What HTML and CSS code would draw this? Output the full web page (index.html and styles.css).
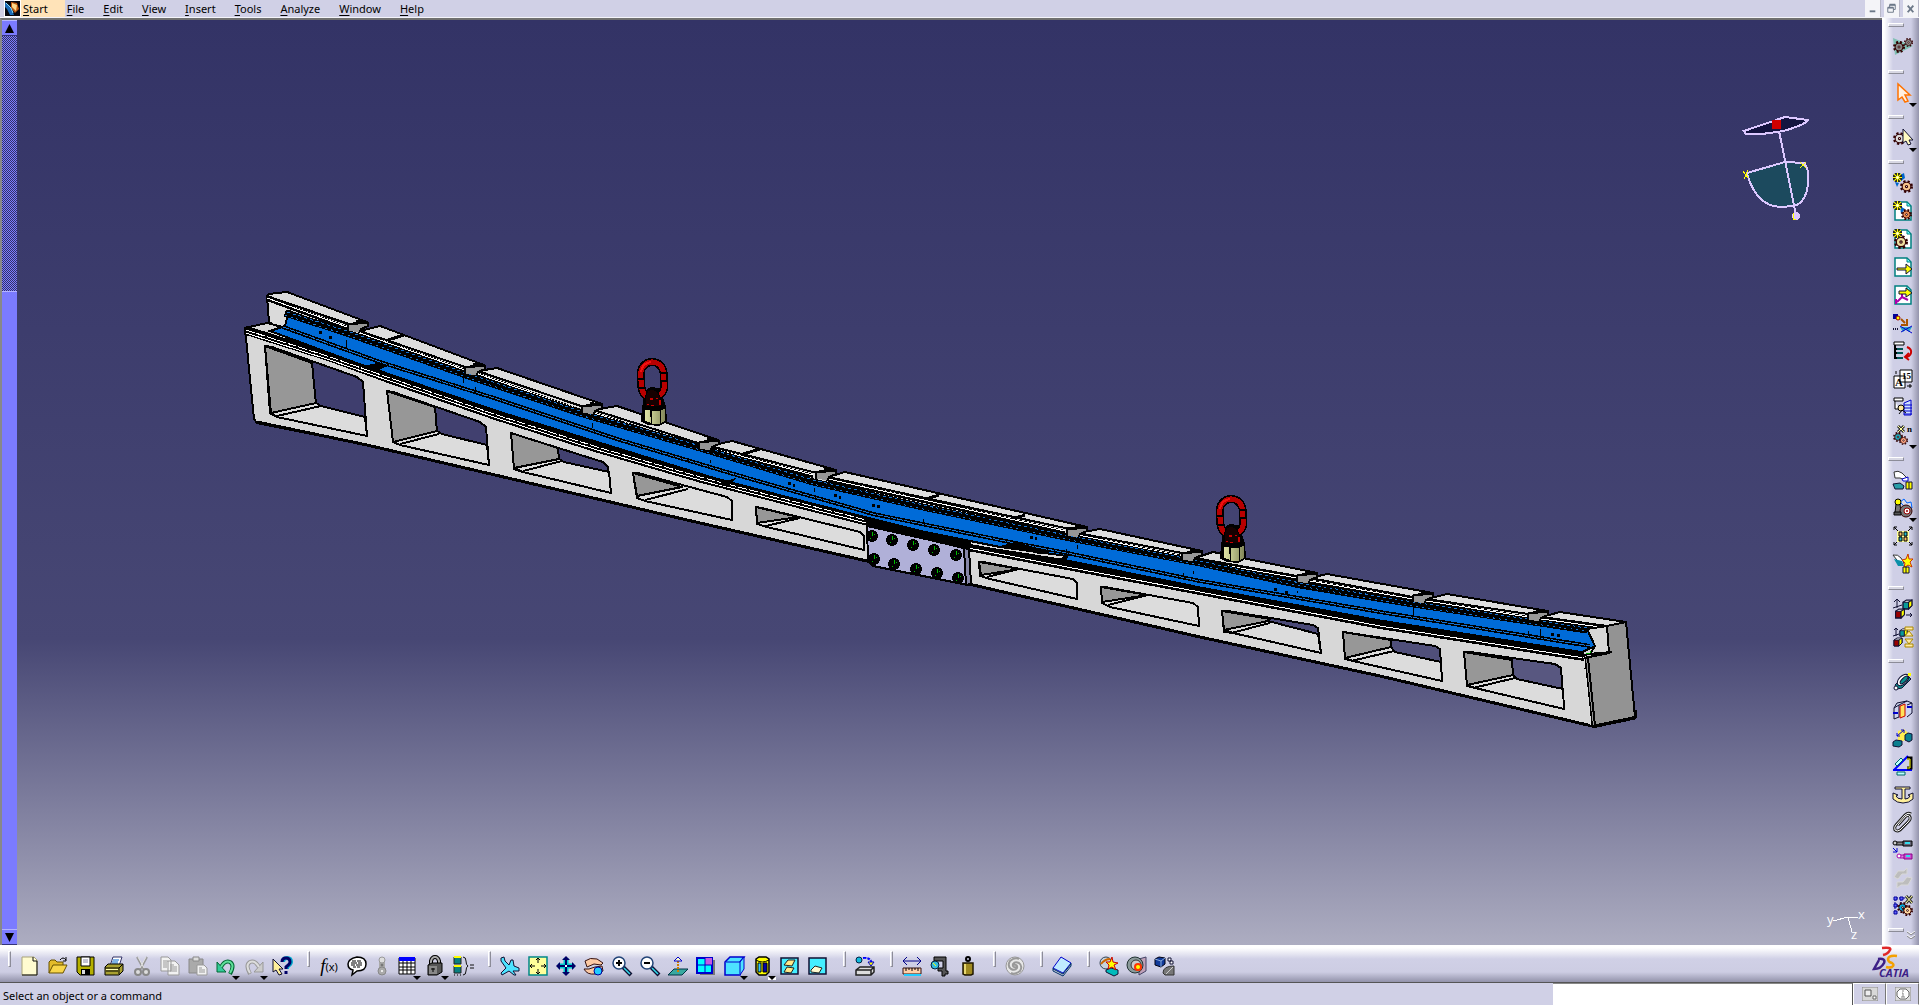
FILE: index.html
```html
<!DOCTYPE html>
<html lang="en">
<head>
	<meta charset="utf-8">
	<title>CATIA</title>
	<link rel="stylesheet" href="styles.css">
</head>
<body>

<!-- shared icon parts -->
<svg class="defs" aria-hidden="true">
	<defs>
		<symbol id="gear" viewBox="0 0 12 12"><circle cx="6" cy="6" r="5" fill="none" stroke="#300" stroke-width="2" stroke-dasharray="2 2"/><circle cx="6" cy="6" r="4" stroke="#300"/><circle cx="6" cy="6" r="1" fill="#fff" stroke="#300"/></symbol>
		<symbol id="spark" viewBox="0 0 8 8"><path d="M4 0v8M0 4h8M1 1l6 6M7 1L1 7" stroke="#222" stroke-width="3"/><path d="M4 0v8M0 4h8M1 1l6 6M7 1L1 7" stroke="#ff0"/><path d="M3 3h2v2H3z" fill="#fff"/></symbol>
		<symbol id="page" viewBox="0 0 20 20"><path d="M2 1h12l4 4v14H2z" fill="#fff" stroke="#008080" stroke-width="1.5"/><path d="M14 1v4h4z" fill="#6ff" stroke="#008080"/></symbol>
		<symbol id="cube" viewBox="0 0 10 10"><path d="M1 3l3-2h5v5L6 9H1z" fill="#fff" stroke="#113"/><path d="M1 3h5v6H1z" fill="currentColor" stroke="#113"/><path d="M6 3l3-2v5L6 9z" fill="#ff0" stroke="#113"/></symbol>
	</defs>
</svg>

<header class="menubar">
	<svg class="app-logo" viewBox="0 0 15 15"><path d="M0 0h15v15H0z" fill="#080810"/><path d="M6 1l6 1 2 6-4 4-4-5z" fill="#c05a10"/><path d="M7 2l5 2-1 6-4-4z" fill="#ffd98a"/><path d="M0 1l5 4 4 9-4 0-3-6-2-2z" fill="#1c6cb8"/><path d="M1 2l5 5 2 5" stroke="#8fe0ff" fill="none"/></svg>
	<nav class="menus">
		<button class="menu menu-start"><u>S</u>tart</button>
		<button class="menu"><u>F</u>ile</button>
		<button class="menu"><u>E</u>dit</button>
		<button class="menu"><u>V</u>iew</button>
		<button class="menu"><u>I</u>nsert</button>
		<button class="menu"><u>T</u>ools</button>
		<button class="menu"><u>A</u>nalyze</button>
		<button class="menu"><u>W</u>indow</button>
		<button class="menu"><u>H</u>elp</button>
	</nav>
	<div class="win-buttons">
		<button aria-label="Minimize"><svg viewBox="0 0 16 16"><path d="M5 11h6" stroke="#6c7888" stroke-width="2"/></svg></button>
		<button aria-label="Restore"><svg viewBox="0 0 16 16"><path d="M6 7V4h6v5h-2M4 7h6v5H4z" fill="none" stroke="#6c7888"/><path d="M4 7h6M6 4h6" stroke="#6c7888" stroke-width="2"/></svg></button>
		<button aria-label="Close"><svg viewBox="0 0 16 16"><path d="M5 5l6 7M11 5l-6 7" stroke="#6c7888" stroke-width="2"/></svg></button>
	</div>
</header>

<main class="work">
	<div class="scroll">
		<button class="scroll-btn" aria-label="Scroll up"><svg viewBox="0 0 15 15"><path d="M7.500 3L12 12H3z"/></svg></button>
		<div class="scroll-track"></div>
		<div class="scroll-thumb"></div>
		<button class="scroll-btn" aria-label="Scroll down"><svg viewBox="0 0 15 15"><path d="M7.500 12L12 3H3z"/></svg></button>
	</div>

	<section class="view">
		<svg class="scene" viewBox="17 20 1865 925" shape-rendering="crispEdges">
			<defs>
				<linearGradient id="nutFill" x1="0" x2="1" y1="0" y2="0"><stop offset="0" stop-color="#dfe3a4"/><stop offset=".35" stop-color="#c4ca90"/><stop offset="1" stop-color="#84885a"/></linearGradient>
				<g id="notch" stroke="#000"><path d="M-21 2L-4 1 0 1-3 5-8 6-9 9-20 8z" fill="#979797" stroke="none"/><path d="M-20 1L0 0M-20 1v7M-12-2L0 0v3l-7 3-2 4M-16 1l8-3" fill="none" stroke-width="2"/></g>
				<g id="bolt" stroke="none"><circle r="6" fill="#000"/><path d="M0-4h1v4h-1zM2-2h1v1h-1zM-2 2h1v1h-1z" fill="#0b0"/></g>
				<g id="lift">
					<path d="M643 408l3-17 5-3 8 1 6 18 1 14-7 4-11-1-6-3z" fill="#000" stroke="#000" stroke-width="2"/>
					<path d="M645 410h5l1 13-6-2zM652 411h8v13h-8zM661 410l4-1v12l-4 2z" fill="url(#nutFill)" stroke="none"/>
					<rect x="641" y="362" width="23" height="36" rx="12" fill="none" stroke="#000" stroke-width="8" transform="rotate(-3 652 380)"/>
					<rect x="641" y="362" width="23" height="36" rx="12" fill="none" stroke="#b80000" stroke-width="5" transform="rotate(-3 652 380)"/>
					<path d="M641 372q1-9 10-10" fill="none" stroke="#f01010" stroke-width="2"/>
					<path d="M638 379h6M638 388h6M661 373h6M661 381h6M652 394v8" stroke="#000" stroke-width="2"/>
					<path d="M645 406q0-12 3-15 4-3 8 0 5 4 6 15z" fill="#160000" stroke="#000"/>
					<path d="M650 398h3v2h-3zM659 400h2v5h-2zM647 404h2v1h-2zM651 405h3v1h-3zM656 398h2v1h-2z" fill="#c00" stroke="none"/>
				</g>
			</defs>

			<!-- rear rail, body first then the top blocks -->
			<g stroke="#000" stroke-width="2" stroke-linejoin="round">
				<path d="M267 296L347 324 465 367 581 406 698 443 813 472 923 498 1065 528 1182 553 1297 576 1413 597 1528 614 1607 626 1609 653 1584 658 1380 634 1180 598 970 552 730 488 497 422 330 360 269 322z" fill="#dadada"/>
				<path d="M287 292L367 322 349 324 267 296 269 294z" fill="#dcdcdc"/>
				<path d="M380 326L484 365 465 367 360 331z" fill="#dcdcdc"/>
				<path d="M497 368L602 404 581 406 478 371z" fill="#dcdcdc"/>
				<path d="M617 406L718 440 698 443 594 410z" fill="#dcdcdc"/>
				<path d="M732 441L836 470 813 472 710 446z" fill="#dcdcdc"/>
				<path d="M845 472L1087 527 1065 528 828 477z" fill="#dcdcdc"/>
				<path d="M1100 529L1202 551 1182 553 1078 533z" fill="#dcdcdc"/>
				<path d="M1213 552L1317 573 1297 576 1195 558z" fill="#dcdcdc"/>
				<path d="M1327 574L1433 593 1413 597 1310 578z" fill="#dcdcdc"/>
				<path d="M1447 594L1548 611 1528 614 1427 599z" fill="#dcdcdc"/>
				<path d="M1560 612L1626 622 1607 626 1542 617z" fill="#dcdcdc"/>
				<path d="M404 335l-16 5M760 449l-17 5M939 495l-16 5M1025 515l-16 5" stroke-width="3"/>
			</g>
			<g fill="none" stroke="#000">
				<path d="M267 299L347 328M360 334L465 371M478 375L581 411M594 414L698 447M710 449L813 476M828 480L1065 532M1078 536L1182 557M1195 561L1297 579M1310 582L1413 600M1427 602L1528 618M1542 620L1607 629" stroke-width="4"/>
				<path d="M267 298L347 327M360 333L465 370M478 374L581 410M594 413L698 446M710 448L813 475M828 479L1065 531M1078 535L1182 556M1195 560L1297 578M1310 581L1413 599M1427 601L1528 617M1542 619L1607 628" stroke="#fff"/>
			</g>

			<!-- front beam -->
			<path d="M245 328L267 323 290 329 390 372 497 412 597 443 727 480 870 520 970 545 1067 562 1200 590 1380 624 1584 655 1592 726 1380 676 1200 637 973 585 867 561 700 523 367 445 257 423 254 419z" fill="#d7d7d7" stroke="#000" stroke-width="2" stroke-linejoin="round"/>
			<path d="M257 422L367 445 700 523 867 561 973 585 1200 637 1380 676 1592 726" fill="none" stroke="#000" stroke-width="3"/>

			<!-- blue curved profile -->
			<path d="M289 311L347 332 463 372 583 412 697 446 813 481 923 505 1065 534 1200 561 1300 582 1413 602 1527 619 1587 628 1595 646 1580 653 1380 621 1200 589 1058 561 1067 556 1000 547 870 521 727 482 620 449 497 411 380 371 367 367 270 331 285 326z" fill="#006bd8" stroke="#000" stroke-width="2"/>
			<g fill="none" stroke="#000">
				<path d="M285 313L347 333 463 374 583 414 697 447 813 482 923 507 1065 537 1200 563 1300 585 1413 604 1527 621 1587 630" stroke-width="7"/>
				<path d="M287 312L347 331 463 372 583 412 697 445 813 480 923 505 1065 535 1200 561 1300 583 1413 602 1527 619 1587 628" stroke="#1673d2" stroke-dasharray="3 3"/>
				<path d="M285 315L347 335 463 376 583 416 697 449 813 484 923 509 1065 539 1200 565 1300 586 1413 606 1527 623 1587 631" stroke="#1673d2" stroke-dasharray="2 4"/>
				<path d="M283 327L380 362 497 399 620 440 730 473 873 514 1010 542 1067 553 1200 581 1380 612 1590 646" stroke-width="4"/>
				<path d="M283 327L380 362 497 399 620 440 730 473 873 514 1010 542 1067 553 1200 581 1380 612 1590 646" stroke="#1673d2" stroke-dasharray="6 1"/>
				<path d="M245 330L330 357 390 379 497 416 597 448 700 478 800 504 870 522 970 547" stroke-width="9"/>
				<path d="M246 330L330 357 390 378 497 415 597 447 700 477 800 503 866 520" stroke="#fff" stroke-dasharray="9 2"/>
				<path d="M246 333L330 360 390 381 497 418 597 450 700 480 800 506 866 523" stroke="#fff"/>
				<path d="M868 523L970 548 1067 563 1200 590 1380 623 1584 655" stroke-width="7"/>
				<path d="M968 549L1067 568 1200 593 1380 627 1584 659" stroke-width="4"/>
				<path d="M968 548L1067 567 1200 592 1380 626 1584 658" stroke="#fff"/>
			</g>
			<path d="M362 366l16-3 10 3-14 6zM716 484l20-6-8 9zM1000 546l16-4 36 10-12 2zM1046 561l22-4-8 8z"/>
			<g>
				<use href="#notch" x="368" y="323"/><use href="#notch" x="485" y="366"/><use href="#notch" x="602" y="405"/><use href="#notch" x="719" y="441"/>
				<use href="#notch" x="836" y="471"/><use href="#notch" x="1087" y="528"/><use href="#notch" x="1202" y="552"/><use href="#notch" x="1317" y="574"/>
				<use href="#notch" x="1433" y="594"/><use href="#notch" x="1548" y="612"/>
			</g>
			<path d="M319 331h3v3h-3zM329 336h3v3h-3zM788 482h3v3h-3zM793 484h2v3h-2zM834 494h3v3h-3zM839 496h2v3h-2zM872 504h3v3h-3zM877 505h3v3h-3zM1030 536h3v3h-3zM1035 537h2v3h-2zM1274 588h3v3h-3zM1285 591h3v3h-3zM1551 633h3v3h-3zM1557 634h3v3h-3z"/>
			<path d="M346 340v9M463 377v6M475 387v6M592 423v5M710 460v3M814 488v4M923 519v3M1066 549v5M1077 545v4M1183 573v4M1193 571v3M1297 591v2M1309 597v2M1413 607v10M1528 631v3M1540 629v10" stroke="#000"/>

			<!-- openings: sky, side wall, floor, outline -->
			<g stroke="#000" stroke-width="2" stroke-linejoin="round">
				<path d="M265 346L272 347 357 377 363 382 367 436 277 417 270 413z" fill="#3f3e6e"/>
				<path d="M265 346L312 363 316 404 271 414z" fill="#979797"/><path d="M316 403L321 406 365 417 367 436 277 417 271 413z" fill="#dcdcdc"/><path d="M277 416L321 406"/>
				<path d="M387 391L393 392 480 422 486 427 489 465 400 445 393 442z" fill="#41406f"/>
				<path d="M387 391L435 407 437 432 393 442z" fill="#979797"/><path d="M437 431L442 434 487 445 489 465 400 445 393 442z" fill="#dcdcdc"/><path d="M400 444L439 434"/>
				<path d="M511 433L517 435 603 462 608 467 611 493 523 472 514 469z" fill="#424170"/>
				<path d="M511 433L558 448 559 460 514 469z" fill="#979797"/><path d="M559 459L564 462 609 472 611 493 523 472 514 468z" fill="#dcdcdc"/><path d="M523 471L562 461"/>
				<path d="M633 473L638 473 727 497 732 501 732 520 645 501 637 498z" fill="#dcdcdc"/><path d="M633 473L682 487 637 496z" fill="#979797"/><path d="M645 500L688 489"/>
				<path d="M756 507L762 508 860 532 864 536 864 550 767 527 757 524z" fill="#dcdcdc"/><path d="M756 507L798 517 757 523z" fill="#979797"/><path d="M766 526L800 518"/>
				<path d="M979 562L983 562 1073 579 1077 583 1077 599 990 579 980 576z" fill="#dcdcdc"/><path d="M979 562L1020 569 981 575z" fill="#979797"/><path d="M987 577L1019 569"/>
				<path d="M1101 587L1105 587 1193 603 1198 607 1199 626 1110 607 1102 603z" fill="#dcdcdc"/><path d="M1101 587L1148 595 1102 602z" fill="#979797"/><path d="M1108 605L1148 595"/>
				<path d="M1222 611L1228 611 1313 625 1318 628 1321 653 1233 633 1224 632z" fill="#4a4976"/>
				<path d="M1222 611L1270 619 1268 622 1224 630z" fill="#979797"/><path d="M1268 621L1318 634 1321 653 1233 633 1224 630z" fill="#dcdcdc"/><path d="M1231 633L1270 623"/>
				<path d="M1343 632L1350 633 1435 646 1440 649 1442 681 1353 661 1345 659z" fill="#504f7a"/>
				<path d="M1343 632L1391 640 1391 648 1345 658z" fill="#979797"/><path d="M1391 647L1395 652 1441 662 1442 681 1353 661 1345 658z" fill="#dcdcdc"/><path d="M1351 661L1394 651"/>
				<path d="M1464 652L1470 652 1555 664 1561 668 1564 709 1475 688 1467 686z" fill="#585780"/>
				<path d="M1464 652L1512 660 1513 676 1467 685z" fill="#979797"/><path d="M1513 675L1517 679 1563 689 1564 709 1475 688 1467 685z" fill="#dcdcdc"/><path d="M1473 688L1515 678"/>
			</g>

			<!-- right end -->
			<g stroke="#000" stroke-width="2" stroke-linejoin="round">
				<path d="M1587 629L1607 626 1609 653 1590 654 1595 646z" fill="#d7d7d7"/>
				<path d="M1607 626L1626 622 1635 717 1592 726 1585 658 1609 653z" fill="#939393"/>
				<path d="M1582 657L1588 654 1612 652M1588 658L1595 726" fill="none"/>
				<path d="M1592 727L1635 718V710" fill="none" stroke-width="3"/>
				<path d="M1584 659l7 66" stroke="#ddd" stroke-width="1"/>
				<path d="M1586 653h4v-2" fill="none" stroke="#0a0" stroke-width="1"/>
			</g>

			<!-- splice plate -->
			<g stroke="#000" stroke-width="2">
				<path d="M867 526L966 548 968 585 873 566 868 561z" fill="#b0b0d8"/>
				<path d="M964 548l5 1 2 35-5 1z" fill="#8686a8"/>
				<path d="M867 524L968 548" stroke-width="4" stroke-dasharray="14 3"/>
			</g>
			<use href="#bolt" x="872" y="536"/><use href="#bolt" x="892" y="540"/><use href="#bolt" x="913" y="545"/><use href="#bolt" x="934" y="550"/><use href="#bolt" x="956" y="555"/>
			<use href="#bolt" x="874" y="559"/><use href="#bolt" x="894" y="564"/><use href="#bolt" x="916" y="569"/><use href="#bolt" x="937" y="573"/><use href="#bolt" x="958" y="578"/>

			<use href="#lift"/>
			<use href="#lift" x="579" y="137"/>

			<!-- compass -->
			<g stroke="#dcc8ff" stroke-width="2" fill="none">
				<path d="M1744 131L1785 117 1808 120Q1806 124 1787 130 1765 135 1746 134z" fill="#141440"/>
				<path d="M1747 173L1785 162 1804 163Q1810 170 1808 185 1806 200 1797 205 1785 208 1773 206 1754 200 1747 173z" fill="#1c4a5e"/>
				<path d="M1779 131L1796 215"/>
				<circle cx="1796" cy="216" r="3" fill="#dcc8ff"/>
				<path d="M1743 171l5 7M1748 170l-4 9M1800 162l6 6M1806 162l-6 6M1793 213v6h3" stroke="#ff0" stroke-width="1"/>
			</g>
			<path d="M1772 120h9v9h-9z" fill="#d00000"/>

			<!-- axis system -->
			<path d="M1833 921L1848 917 1858 918M1848 917L1852 932" stroke="#fff" fill="none"/>
			<g class="axis-text"><text x="1827" y="924">y</text><text x="1858" y="919">x</text><text x="1851" y="939">z</text></g>
		</svg>
	</section>

	<aside class="side-tools">
		<div class="grip-h"></div>
		<button class="tool tool-wb" aria-label="Assembly Design"><svg viewBox="0 0 20 20"><path d="M0 1l20 8-18 9z" fill="#7fc0b4"/><g fill="#888"><use href="#gear" x="0" y="4" width="12" height="12"/><use href="#gear" x="11" y="1" width="9" height="9"/></g></svg></button>
		<div class="grip-h"></div>
		<button class="tool more" aria-label="Select"><svg viewBox="0 0 20 20"><path d="M5 1v16l4-3 3 5 3-1-3-6h5z" fill="#fff0e0" stroke="#ff7300" stroke-width="1.500"/></svg></button>
		<div class="grip-h"></div>
		<button class="tool more" aria-label="Component selection"><svg viewBox="0 0 20 20"><g fill="#ddd"><use href="#gear" x="0" y="4" width="13" height="13"/></g><path d="M10 1v14l3-2 2 4 3-1-2-4h4z" fill="#fffbc0" stroke="#113"/></svg></button>
		<div class="grip-h"></div>
		<button class="tool" aria-label="Component"><svg viewBox="0 0 20 20"><path d="M7 2l4-2 1 5-4 3zM2 9l4 1-2 4z" fill="#06c"/><g fill="#f6c48c"><use href="#gear" x="7" y="7" width="13" height="13"/></g><use href="#spark" width="9" height="9"/></svg></button>
		<button class="tool" aria-label="Product"><svg viewBox="0 0 20 20"><use href="#page"/><path d="M7 5l5 3-4 5z" fill="#06c"/><g fill="#e88a50"><use href="#gear" x="8" y="8" width="11" height="11"/></g><use href="#spark" width="9" height="9"/></svg></button>
		<button class="tool" aria-label="Part"><svg viewBox="0 0 20 20"><use href="#page"/><g fill="#efe0a0"><use href="#gear" x="1" y="6" width="14" height="14"/></g><use href="#spark" width="9" height="9"/></svg></button>
		<button class="tool" aria-label="Existing component"><svg viewBox="0 0 20 20"><use href="#page"/><path d="M4 11h9V7l6 5-6 5v-4H4z" fill="#ff0" stroke="#113"/></svg></button>
		<button class="tool" aria-label="Existing component with positioning"><svg viewBox="0 0 20 20"><use href="#page"/><path d="M4 17l5-5V8m0 4l6 3M3 14v5" stroke="#a0a" stroke-width="2" fill="none"/><path d="M6 6h7V3l6 5-6 4V9H6z" fill="#ff0" stroke="#113"/></svg></button>
		<button class="tool" aria-label="Replace component"><svg viewBox="0 0 20 20"><path d="M0 1h5v5H0z" fill="#009"/><circle cx="5" cy="5" r="2" fill="#ff0" stroke="#900"/><path d="M8 6l4 4M14 6v6H8" stroke="#a50" stroke-width="2" fill="none"/><path d="M7 14h12l-3 5-3-3-3 3z" fill="#29a8c8"/><path d="M7 13l12 7M19 13L8 19" stroke="#00c"/><path d="M0 16h1m1 0h1m1 0h1" stroke="#113" stroke-width="2"/></svg></button>
		<button class="tool" aria-label="Graph tree reordering"><svg viewBox="0 0 20 20"><path d="M1 1h10v3H1z" fill="#fff" stroke="#000"/><path d="M2 4v14M2 8h8M2 12h8M2 17h8" stroke="#000" stroke-width="2"/><path d="M4 8h6M4 12h6M4 17h6" stroke="#0aa"/><path d="M14 6q5 2 4 6t-6 4M16 12l-4 4 4 3" stroke="#c00" stroke-width="2" fill="none"/></svg></button>
		<button class="tool" aria-label="Generate numbering"><svg viewBox="0 0 20 20"><path d="M7 1h12v12H7zM1 7h11v12H1z" fill="#fff" stroke="#000"/><text x="2" y="17" class="glyph">A</text><text x="9" y="10" class="glyph glyph-s">15</text><path d="M14 17h5m-2-2v4M3 2v3" stroke="#000"/></svg></button>
		<button class="tool" aria-label="Selective load"><svg viewBox="0 0 20 20"><path d="M1 1h9v3H1zM2 4v8h4" fill="#fff" stroke="#000"/><path d="M11 6l7-3v15l-7 0z" fill="#cfe0ff" stroke="#00c"/><path d="M11 8h8m-8 3h8m-8 3h8m-8 3h8" stroke="#00c"/><circle cx="8" cy="11" r="3" fill="#ffe9a0" stroke="#000"/><path d="M6 17l3-4 4 3" stroke="#000" fill="none"/></svg></button>
		<button class="tool more" aria-label="Manage representations"><svg viewBox="0 0 20 20"><path d="M5 1l6 6M11 1L5 7" stroke="#333" stroke-width="3"/><path d="M5 1l6 6M11 1L5 7" stroke="#ff9"/><g fill="#2ab"><use href="#gear" x="0" y="7" width="10" height="10"/></g><g fill="#fa8"><use href="#gear" x="6" y="11" width="9" height="9"/></g><text x="14" y="7" class="glyph glyph-s">n</text></svg></button>
		<div class="grip-h"></div>
		<button class="tool" aria-label="Manipulation"><svg viewBox="0 0 20 20"><path d="M1 2q4-2 8 1l5 5-2 2-5-2-5 0z" fill="#fff" stroke="#333"/><path d="M9 9l6-2v4l-5 0z" fill="#fff" stroke="#00c"/><path d="M0 14l7-1 4 3-1 3H2z" fill="#2a9da8" stroke="#113"/><path d="M13 12h6v7h-6z" fill="#ff0" stroke="#113"/><path d="M16 12v7" stroke="#113"/></svg></button>
		<button class="tool more" aria-label="Snap"><svg viewBox="0 0 20 20"><path d="M7 4l4-3 3 4 4-1 1 6-6 0z" fill="#dde" stroke="#06f"/><path d="M3 6h4l1 9H2z" fill="#777" stroke="#000"/><circle cx="5" cy="4" r="3" fill="#ff0" stroke="#000"/><circle cx="13" cy="13" r="6" fill="#777" stroke="#300"/><circle cx="14" cy="13" r="3" fill="#fff" stroke="#900"/><circle cx="14" cy="13" r="1" fill="#900"/><path d="M1 14h7v3H1z" fill="#555" stroke="#000"/></svg></button>
		<button class="tool" aria-label="Explode"><svg viewBox="0 0 20 20"><path d="M1 1l5 5M19 1l-5 5M1 19l5-5M19 19l-5-5M1 4V1h3M16 1h3v3M1 16v3h3M16 19h3v-3" stroke="#000" fill="none"/><path d="M4 5h12v11H4z" fill="#ff9"/><path d="M6 6h3v4H6zM11 11h3v4h-3z" fill="#fb6" stroke="#000"/><path d="M11 6h3v4h-3zM6 11h3v4H6z" fill="#2bc" stroke="#000"/></svg></button>
		<button class="tool" aria-label="Stop on clash"><svg viewBox="0 0 20 20"><path d="M0 1q5-1 8 3l3 5-4 1z" fill="#fff" stroke="#333"/><path d="M1 5l8 2 2 5H5z" fill="#0a8fa8"/><path d="M15 0l1 5h4l-3 3 2 5-4-2-4 3 1-5-3-3 4-1z" fill="#ff0" stroke="#c30"/><path d="M10 13h6v6h-6z" fill="#ff0" stroke="#113"/><path d="M13 13v6" stroke="#113"/></svg></button>
		<div class="grip-h"></div>
		<button class="tool" aria-label="Quick constraint"><svg viewBox="0 0 20 20"><g color="#0a9a9a"><use href="#cube" x="9" y="0" width="11" height="11"/></g><g color="#900"><use href="#cube" x="1" y="9" width="12" height="11"/></g><path d="M4 0v9M1 3l3-3 3 3M0 9l9-3M13 16h6m-2-2l2 2-2 2" stroke="#113" fill="none"/></svg></button>
		<button class="tool" aria-label="Reuse pattern"><svg viewBox="0 0 20 20"><g color="#0a9a9a"><use href="#cube" x="6" y="0" width="9" height="11"/></g><g color="#900"><use href="#cube" x="0" y="10" width="10" height="10"/></g><path d="M3 1v8M1 3l2-2 2 2M0 9l6-2" stroke="#113" fill="none"/><path d="M12 0h8v3h-8zM12 17h8v3h-8zM16 4l4 5h-8zM12 12h8l-4 5z" fill="#ffe9a0" stroke="#a80"/></svg></button>
		<div class="grip-h"></div>
		<button class="tool" aria-label="Coincidence"><svg viewBox="0 0 20 20"><path d="M2 13L13 2l5 5-9 9-5 1z" fill="#0a8f8f" stroke="#113"/><ellipse cx="10" cy="8" rx="7" ry="4" transform="rotate(-45 10 8)" fill="#fff" stroke="#113"/><ellipse cx="11" cy="8" rx="5" ry="2" transform="rotate(-45 11 8)" fill="#0a8f8f" stroke="#113"/><path d="M15 1h3v3h-3z" fill="#ff0"/><circle cx="3" cy="16" r="2" fill="#fff" stroke="#113"/></svg></button>
		<button class="tool" aria-label="Contact"><svg viewBox="0 0 20 20"><path d="M1 8l5-3v12l-5 2zM1 8l3-5 10-2 5 2v10l-5 4M14 5l5-2M6 5l8-4" fill="#cfd4ee" stroke="#113"/><path d="M7 6l5-2v12l-5 2z" fill="#ffe35a" stroke="#c00"/><path d="M0 13h5M14 7h5" stroke="#00c" stroke-width="2"/></svg></button>
		<button class="tool" aria-label="Offset"><svg viewBox="0 0 20 20"><path d="M5 3l6-2 4 4-4 8-6-1z" fill="#ffef50"/><path d="M4 8l7-6M4 5v3h3M8 2h3v3" stroke="#00c" fill="none"/><path d="M12 7l3-2 4 1v6l-3 2-4-2zM0 14l3-2 6 1v4l-3 2-6-1z" fill="#0a7f8f" stroke="#113"/></svg></button>
		<button class="tool" aria-label="Angle"><svg viewBox="0 0 20 20"><path d="M0 14h19M1 14L15 0" stroke="#00f" stroke-width="2"/><path d="M2 8l6-6 2 2-6 6zM4 16h8v3H4z" fill="#bff" stroke="#066"/><path d="M14 2h4v10h-4" fill="none" stroke="#000" stroke-width="3"/><path d="M14 3h3v9h-3" fill="none" stroke="#ff0"/></svg></button>
		<button class="tool" aria-label="Fix component"><svg viewBox="0 0 20 20"><path d="M2 3h15v2h-5v10q4 0 5-3l-2-1 5-2v6q-4 4-10 4T0 15V9l5 2-2 1q1 3 6 3V5H2z" fill="#ffef9a" stroke="#113"/></svg></button>
		<button class="tool" aria-label="Fix together"><svg viewBox="0 0 20 20"><path d="M5 13L13 4q3-2 4 1 1 2-2 5l-8 8q-3 2-5 0-1-3 1-5l9-10q3-3 6-1" fill="none" stroke="#222" stroke-width="3"/><path d="M5 13L13 4q3-2 4 1 1 2-2 5l-8 8q-3 2-5 0-1-3 1-5l9-10q3-3 6-1" fill="none" stroke="#fff"/></svg></button>
		<button class="tool" aria-label="Flexible sub-assembly"><svg viewBox="0 0 20 20"><path d="M3 2h8v3H3z" fill="#888" stroke="#000"/><circle cx="2" cy="3" r="2" fill="#ccc" stroke="#000"/><path d="M10 1h9v5h-9z" fill="#667" stroke="#000"/><path d="M12 3h5" stroke="#3de" stroke-width="2"/><path d="M0 8l4 4M4 8v4H0" stroke="#00c" fill="none"/><path d="M7 15h6v3H7z" fill="#d8d" stroke="#a0a"/><circle cx="6" cy="16" r="2" fill="#fff" stroke="#a0a"/><path d="M11 14h8v5h-8z" fill="#d050d0" stroke="#808"/><path d="M13 16h4" stroke="#3de" stroke-width="2"/></svg></button>
		<button class="tool" aria-label="Change constraint" disabled><svg viewBox="0 0 20 20"><path d="M1 9l4-6h6l3-3v6h-5l-4 5zM19 10l-4 7H8l-4 3v-6h6l4-5z" fill="#bdbdbd" stroke="#d8d8d8"/></svg></button>
		<button class="tool" aria-label="Reuse"><svg viewBox="0 0 20 20"><path d="M2 2v16M2 2h10M2 9h6M8 2v8" stroke="#009" stroke-dasharray="3 1"/><path d="M1 1h3v3H1zM7 1h3v3H7zM1 8h3v3H1zM1 15h3v3H1z" fill="#66f" stroke="#009"/><path d="M13 0l6 7M19 0l-6 7" stroke="#333" stroke-width="3"/><path d="M13 0l6 7M19 0l-6 7" stroke="#ff9"/><g fill="#0ad"><use href="#gear" x="4" y="6" width="11" height="11"/></g><g fill="#ffd9a0"><use href="#gear" x="9" y="9" width="11" height="11"/></g></svg></button>
		<div class="grip-h"></div>
		<svg class="chevrons" viewBox="0 0 8 8"><path d="M0 0l4 3 4-3M0 4l4 3 4-3" fill="none" stroke="#fff"/><path d="M0 1l4 3 4-3M0 5l4 3 4-3" fill="none" stroke="#888"/></svg>
	</aside>
</main>

<footer class="bottom-tools">
	<div class="grip-v"></div>
	<button class="tool" aria-label="New"><svg viewBox="0 0 20 20"><path d="M2 1h12l3 3v15H2z" fill="#fffbd0" stroke="#a9a478"/><path d="M13 1v4h4M17 5v14H2" fill="none" stroke="#111"/></svg></button>
	<button class="tool" aria-label="Open"><svg viewBox="0 0 20 20"><path d="M1 17V6l2-2h4l2 2h6v3" fill="#e3bb2a" stroke="#665000"/><path d="M1 17l4-8h14l-4 8z" fill="#f8d64a" stroke="#665000"/><path d="M12 4q3-4 6 0M18 1v4h-3" fill="none" stroke="#000"/></svg></button>
	<button class="tool" aria-label="Save"><svg viewBox="0 0 20 20"><path d="M1 1h17v18H4l-3-3z" fill="#b5b000" stroke="#000"/><path d="M5 1h9v9H5z" fill="#fff" stroke="#000"/><path d="M7 4h5M7 6h5" stroke="#88a"/><path d="M5 13h9v6H5z" fill="#000"/><path d="M6 14h3v4H6z" fill="#ddd"/></svg></button>
	<button class="tool" aria-label="Print"><svg viewBox="0 0 20 20"><path d="M6 10l3-9h9l-3 9z" fill="#fff" stroke="#336"/><path d="M9 4h6M8 6h6M8 8h6" stroke="#06c"/><path d="M1 11l3-3h15v7l-4 4H1z" fill="#a8a030" stroke="#000"/><path d="M1 12h14l4-4M2 15h12M15 12v6" stroke="#000" fill="none"/><path d="M2 13h12v1H2z" fill="#ffffb0"/></svg></button>
	<button class="tool" aria-label="Cut" disabled><svg viewBox="0 0 20 20"><path d="M5 1l7 13M15 1L8 14" stroke="#999" stroke-width="2"/><path d="M6 1l6 11M14 1L8 12" stroke="#e4e4e4"/><circle cx="6" cy="16" r="3" fill="#ddd" stroke="#888" stroke-width="2"/><circle cx="14" cy="16" r="3" fill="#ddd" stroke="#888" stroke-width="2"/></svg></button>
	<button class="tool" aria-label="Copy" disabled><svg viewBox="0 0 20 20"><path d="M1 1h7l3 3v11H1zM8 5h7l4 4v10H8z" fill="#f2f2f2" stroke="#999"/><path d="M3 5h5M3 7h4M3 9h4M3 11h4M10 9h4M10 11h7M10 13h7M10 15h7" stroke="#999"/></svg></button>
	<button class="tool" aria-label="Paste" disabled><svg viewBox="0 0 20 20"><path d="M1 3h14v14H1z" fill="#aaa" stroke="#888"/><path d="M5 1h6v4H5z" fill="#ddd" stroke="#888"/><path d="M9 9h7l3 3v7H9z" fill="#f2f2f2" stroke="#999"/><path d="M11 12h3M11 14h6M11 16h6" stroke="#999"/></svg></button>
	<button class="tool more" aria-label="Undo"><svg viewBox="0 0 20 20"><path d="M5 11Q9 4 14 6q5 3 0 12" fill="none" stroke="#063" stroke-width="4"/><path d="M1 6v10h9z" fill="#3c9" stroke="#063"/><path d="M5 11Q9 4 14 6q5 3 0 11" fill="none" stroke="#5fe09a" stroke-width="2"/></svg></button>
	<button class="tool more" aria-label="Redo" disabled><svg viewBox="0 0 20 20"><path d="M15 11Q11 4 6 6q-5 3 0 12" fill="none" stroke="#999" stroke-width="4"/><path d="M19 6v10h-9z" fill="#ccc" stroke="#999"/><path d="M15 11Q11 4 6 6q-5 3 0 11" fill="none" stroke="#ddd" stroke-width="2"/></svg></button>
	<button class="tool" aria-label="What's this"><svg viewBox="0 0 20 20"><path d="M1 3v13l3-2 3 5 3-1-3-5h4z" fill="#ffef9a" stroke="#113"/><path d="M11 6q0-4 4-4t4 4q0 2-4 5v2" fill="none" stroke="#0ac" stroke-width="4"/><path d="M10 6q0-4 4-4t4 4q0 2-4 5v2M14 15v3" fill="none" stroke="#006" stroke-width="3"/></svg></button>

	<div class="grip-v"></div>
	<button class="tool tool-fx" aria-label="Formula"><i>f</i>(x)</button>
	<button class="tool" aria-label="Comment"><svg viewBox="0 0 20 20"><path d="M10 1q9 0 9 7t-9 7l-5 4 1-5Q1 13 1 8t9-7z" fill="#fff" stroke="#000" stroke-width="1.500"/><path d="M5 5h4m1 0h4M4 7h6m1 0h4M4 9h4m1 0h6M6 11h3m1 0h3" stroke="#000"/></svg></button>
	<button class="tool tool-narrow" aria-label="Check" disabled><svg viewBox="0 0 20 20"><path d="M7 4h6v12H7z" fill="#aaa"/><circle cx="10" cy="4" r="3" fill="#ddd" stroke="#999"/><circle cx="10" cy="9" r="2" fill="#777" stroke="#aaa"/><circle cx="10" cy="15" r="4" fill="#aaa" stroke="#888"/><circle cx="10" cy="15" r="1" fill="#fff"/></svg></button>
	<button class="tool more" aria-label="Design table"><svg viewBox="0 0 20 20"><path d="M2 4h16v14H2z" fill="#fff"/><path d="M2 2v16h16V2M2 7h16M2 11h16M2 14h16M6 4v14M10 4v14M14 4v14" stroke="#000" fill="none"/><path d="M2 1h16v4H2z" fill="#00f"/></svg></button>
	<button class="tool more" aria-label="Lock"><svg viewBox="0 0 20 20"><path d="M6 9V5q1-4 4-4t4 4v4" fill="none" stroke="#000" stroke-width="4"/><path d="M6 9V5q1-4 4-4t4 4v4" fill="none" stroke="#aaa" stroke-width="2"/><path d="M3 9l4-2h10v9l-5 3H3z" fill="#555" stroke="#000"/><path d="M4 10h8v8H4z" fill="#888"/><path d="M8 12v4M6 13h4" stroke="#000"/></svg></button>
	<button class="tool" aria-label="Equivalent dimensions"><svg viewBox="0 0 20 20"><path d="M1 1h7v7H1zM1 10h7v7H1z" fill="#0a7f7f" stroke="#222"/><path d="M1 1h7M1 10h7" stroke="#ff0" stroke-width="2"/><path d="M1 19h1m2 0h1m2 0h1" stroke="#000"/><path d="M10 1q3 0 3 4t2 5q-2 1-2 5t-3 4M17 9h4M17 12h4" fill="none" stroke="#111"/></svg></button>

	<div class="grip-v"></div>
	<button class="tool" aria-label="Fly mode"><svg viewBox="0 0 20 20"><path d="M1 2l3-1 1 4 4 4 2-5 2 0 1 6 5 2v3l-6 0 3 4-2 0-5-4-7 4-1-2 5-5-5-7z" fill="#4de3ff" stroke="#113"/></svg></button>
	<button class="tool" aria-label="Fit all in"><svg viewBox="0 0 20 20"><path d="M1 1h18v18H1z" fill="#ff9" stroke="#088" stroke-width="1.500"/><path d="M10 2v5M10 13v5M2 10h5M13 10h5M8 4l2-2 2 2M8 16l2 2 2-2M4 8l-2 2 2 2M16 8l2 2-2 2" stroke="#000" fill="none"/></svg></button>
	<button class="tool" aria-label="Pan"><svg viewBox="0 0 20 20"><path d="M10 2v16M2 10h16" stroke="#0cc" stroke-width="5"/><path d="M10 2v16M2 10h16" stroke="#006" stroke-width="2"/><path d="M10 0l4 4H6zM10 20l4-4H6zM0 10l4-4v8zM20 10l-4-4v8z" fill="#006"/><path d="M9 9h2v2H9z" fill="#fff"/></svg></button>
	<button class="tool" aria-label="Rotate"><svg viewBox="0 0 20 20"><path d="M1 5q5-4 12-2l6 4-2 2-7-1-7 3z" fill="#fcc9a4" stroke="#311"/><path d="M0 13q3 6 11 5l8-3-1-5-7 1-6 2z" fill="#fcc9a4" stroke="#311"/><circle cx="14" cy="15" r="4" fill="#2cf" stroke="#009"/></svg></button>
	<button class="tool" aria-label="Zoom in"><svg viewBox="0 0 20 20"><path d="M11 11l8 8" stroke="#113" stroke-width="4"/><path d="M12 12l6 6" stroke="#3de" stroke-width="1.500"/><circle cx="7" cy="7" r="6" fill="#fff" stroke="#247" stroke-width="1.500"/><path d="M4 7h6M7 4v6" stroke="#000" stroke-width="2"/></svg></button>
	<button class="tool" aria-label="Zoom out"><svg viewBox="0 0 20 20"><path d="M11 11l8 8" stroke="#113" stroke-width="4"/><path d="M12 12l6 6" stroke="#3de" stroke-width="1.500"/><circle cx="7" cy="7" r="6" fill="#fff" stroke="#247" stroke-width="1.500"/><path d="M4 7h6" stroke="#000" stroke-width="2"/></svg></button>
	<button class="tool" aria-label="Normal view"><svg viewBox="0 0 20 20"><path d="M0 19l6-6h14l-6 6z" fill="#39a9a0" stroke="#034"/><path d="M10 16V5" stroke="#d08000" stroke-dasharray="2 1" stroke-width="2"/><path d="M10 1l4 4H6z" fill="#ffc" stroke="#00c"/></svg></button>
	<button class="tool" aria-label="Multi-view"><svg viewBox="0 0 20 20"><path d="M4 4h15v15H4z" fill="#777"/><path d="M1 2h15v15H1z" fill="#0ff" stroke="#00c" stroke-width="2"/><path d="M9 2h7v7H9z" fill="#c55ae0"/><path d="M9 2v15M1 9h15" stroke="#00c"/></svg></button>
	<button class="tool more" aria-label="Isometric view"><svg viewBox="0 0 20 20"><path d="M1 6l5-5h14l-4 5v13H1z" fill="#4de3ff" stroke="#00c" stroke-width="1.500"/><path d="M1 6h15V19M16 6l4-5v12l-4 6" fill="#4de3ff" stroke="#00c"/></svg></button>
	<button class="tool more more-light" aria-label="Shading with edges"><svg viewBox="0 0 20 20"><path d="M4 3l3-2h7l3 2v13l-3 3H7l-3-3z" fill="#ff0" stroke="#000" stroke-width="1.500"/><path d="M6 7h3v9H6z" fill="#3cf" stroke="#000"/><path d="M11 7h4v9h-4z" fill="#00a" stroke="#000"/><path d="M4 4q6 4 13 0" fill="none" stroke="#000"/></svg></button>
	<button class="tool" aria-label="Hide/Show"><svg viewBox="0 0 20 20"><path d="M1 2h17v16H1z" fill="#4ef" stroke="#113" stroke-width="1.500"/><path d="M4 9l4-5 7 0-3 6zM4 16l3-5 7 1-3 5z" fill="#ffe98a" stroke="#222"/></svg></button>
	<button class="tool" aria-label="Swap visible space"><svg viewBox="0 0 20 20"><path d="M1 2h17v16H1z" fill="#4ef" stroke="#113" stroke-width="1.500"/><path d="M3 14l4-4 7 2-3 5-8-1z" fill="#fffbd0" stroke="#222"/></svg></button>

	<div class="grip-v"></div>
	<button class="tool" aria-label="Measure between items"><svg viewBox="0 0 20 20"><circle cx="4" cy="4" r="3" fill="#1bd" stroke="#024"/><path d="M8 2q8-1 9 6" fill="none" stroke="#00f" stroke-width="2" stroke-dasharray="3 1"/><path d="M13 6h6l-3 4z" fill="#ff0" stroke="#00c"/><path d="M1 14l4-3h14v5l-3 3H1zM1 14h15v5M16 14l3-3" fill="#ddd" stroke="#222" stroke-width="1.500"/></svg></button>

	<div class="grip-v"></div>
	<button class="tool" aria-label="Measure between"><svg viewBox="0 0 20 20"><path d="M1 5h18M5 1L1 5l4 4M15 1l4 4-4 4" fill="none" stroke="#008"/><path d="M1 12h18v6H1z" fill="#ffd0a8" stroke="#311"/><path d="M4 12v3M7 12v2M10 12v3M13 12v2M16 12v3" stroke="#000"/><path d="M19 19H2" stroke="#2cf" stroke-width="2"/></svg></button>
	<button class="tool" aria-label="Measure item"><svg viewBox="0 0 20 20"><path d="M4 1h12v14h2v3h-3v2h-3v-5H8v-3h5V5H4z" fill="#555" stroke="#000"/><circle cx="5" cy="9" r="4" fill="#3bd" stroke="#024"/><path d="M3 7l3 3" stroke="#ff0"/></svg></button>
	<button class="tool" aria-label="Measure inertia"><svg viewBox="0 0 20 20"><circle cx="10" cy="3" r="2" fill="none" stroke="#000" stroke-width="2"/><path d="M5 7h10v11l-2 1H7l-2-1z" fill="#a08a20" stroke="#221a00" stroke-width="1.500"/><path d="M7 8v10" stroke="#e8d870" stroke-width="2"/></svg></button>

	<div class="grip-v"></div>
	<button class="tool" aria-label="Update all" disabled><svg viewBox="0 0 20 20"><circle cx="10" cy="10" r="9" fill="#e8e8e8" stroke="#999"/><path d="M12 11q-5 1-4-3 2-3 6-1 4 3 1 8-5 4-9 2M8 9q5-1 4 3-2 3-6 1-4-3-1-8 5-4 9-2" fill="none" stroke="#999" stroke-width="2"/></svg></button>

	<div class="grip-v"></div>
	<button class="tool" aria-label="Catalog browser"><svg viewBox="0 0 20 20"><path d="M1 12L9 1l10 6-8 10z" fill="#bfeaff" stroke="#00c"/><path d="M1 12v3l10 5 8-10V7M1 13l10 5 8-10" fill="none" stroke="#036"/></svg></button>

	<div class="grip-v"></div>
	<button class="tool" aria-label="Apply material"><svg viewBox="0 0 20 20"><circle cx="7" cy="7" r="6" fill="#c6d2dc" stroke="#345"/><path d="M2 8q4-5 9-5" stroke="#c60" stroke-width="2" fill="none"/><path d="M7 14l5-2 7 2v4l-4 2-8-4z" fill="#0bb" stroke="#113"/><path d="M13 1l1 5 5 1-4 2 2 5-4-3-4 2 1-4-3-3 4 0z" fill="#ff0" stroke="#c00"/></svg></button>
	<button class="tool" aria-label="Render"><svg viewBox="0 0 20 20"><path d="M12 3l7-2v14l-7 4z" fill="#c0a0b8" stroke="#446"/><circle cx="8" cy="9" r="8" fill="#8a9a9a" stroke="#233"/><circle cx="9" cy="9" r="5" fill="#ccc" stroke="#333"/><circle cx="11" cy="11" r="4" fill="#f30"/><circle cx="11" cy="11" r="2" fill="#ff0"/></svg></button>
	<button class="tool" aria-label="Photo studio"><svg viewBox="0 0 20 20"><path d="M0 3l4-2 6 1v6l-4 3-6-2z" fill="#113a9a" stroke="#001"/><path d="M0 3l6 2 4-3M6 5v6" stroke="#8ad" fill="none"/><path d="M13 2h3v3h-3zM15 5h3v3h-3z" fill="#fff" stroke="#113"/><path d="M8 17q0-7 11-7v9h-9z" fill="#777" stroke="#333"/><path d="M11 18l7-7" stroke="#ccc"/></svg></button>

	<svg class="brand" viewBox="0 0 42 34">
		<path d="M11 1q10-1 8 2-2 4-7 5" fill="none" stroke="#e02828" stroke-width="2.500"/>
		<path d="M7 12q8-1 6 4-3 6-10 6l5-9" fill="none" stroke="#3c1f86" stroke-width="2.500"/>
		<path d="M26 9q-8-1-9 3 0 3 4 4 3 2 0 4-3 1-6 0" fill="none" stroke="#f4a000" stroke-width="2.500"/>
		<text x="8" y="30">CATIA</text>
	</svg>
</footer>

<div class="status">
	<label class="status-text" for="cmd">Select an object or a command</label>
	<input class="status-input" id="cmd" type="text">
	<button class="status-btn" aria-label="Command window"><svg viewBox="0 0 16 14"><path d="M0 0h16v14H0z" fill="#d8d8d8" stroke="#888"/><path d="M3 3h6v6H3z" fill="#eee" stroke="#555"/><path d="M11 9h3v3h-3z" fill="#fff" stroke="#666"/></svg></button>
	<button class="status-btn" aria-label="Information"><svg viewBox="0 0 16 14"><path d="M0 0h16v14H0z" fill="#ddd" stroke="#888"/><path d="M5 2h6l3 3v4l-3 3H5L2 9V5z" fill="#fff" stroke="#666"/><path d="M8 3v2M7 6h1v4M6 10h4" stroke="#888" fill="none"/></svg></button>
</div>

</body>
</html>
```
FILE: styles.css
```css
* {
	box-sizing: border-box;
}
body {
	margin: 0;
	height: 100vh;
	display: flex;
	flex-direction: column;
	overflow: hidden;
	background: #d0d0e6;
	font-family: "Noto Sans", "Open Sans", sans-serif;
	font-size: 11px;
	color: #000;
}
button {
	font: inherit;
	color: inherit;
	padding: 0;
	border: none;
	background: none;
}
svg {
	display: block;
}
.defs {
	position: absolute;
	width: 0;
	height: 0;
}

/* menu bar */
.menubar {
	display: flex;
	flex: none;
	height: 18px;
	padding-left: 4px;
	border-bottom: 1px solid #f4f4fa;
}
.app-logo {
	width: 17px;
	height: 17px;
	border: 1px solid #fff;
}
.menus {
	display: flex;
	flex: 1;
}
.menu {
	padding: 0 17px 0 2px;
	line-height: 16px;
}
.menu-start {
	background: #ffe3b8;
}
.menu u {
	text-underline-offset: 2px;
}
.win-buttons {
	display: flex;
	gap: 3px;
}
.win-buttons button {
	width: 16px;
	height: 17px;
	background: #f4f4f8;
	border-right: 1px solid #b8b8c8;
}

/* work area */
.work {
	display: flex;
	flex: 1;
	min-height: 0;
}
.scroll {
	display: flex;
	flex-direction: column;
	width: 17px;
	border-left: 2px solid #888;
	border-top: 2px solid #707070;
}
.scroll-btn {
	height: 16px;
	background: #7b7bff;
	border-top: 1px solid #b4b4ff;
	border-bottom: 1px solid #34347a;
}
.scroll-track {
	flex: 2;
	background: repeating-conic-gradient(#7b7bff 0 25%, #333366 0 50%) 0 0 / 2px 2px;
}
.scroll-thumb {
	flex: 5;
	background: #7b7bff;
	border-top: 1px solid #b4b4ff;
}
.view {
	flex: 1;
	min-width: 0;
	border-top: 2px solid #707070;
	background: linear-gradient(#333366 0%, #474774 67%, #adadc1 100%);
}
.scene {
	width: 100%;
	height: 100%;
}
.axis-text {
	fill: #fff;
	font: 13px "Open Sans", sans-serif;
}

/* toolbars */
.side-tools {
	position: relative;
	display: flex;
	flex-direction: column;
	width: 37px;
	padding: 0 1px 0 6px;
	background: linear-gradient(to right, #fff 2px, #cfcfe6 11px, #cfcfe6 29px, #9494ac 37px);
}
.grip-h {
	flex: none;
	width: 16px;
	height: 4px;
	margin: 8px 0 5px;
	background: #d8d8e4;
	border: 1px solid #fff;
	border-right-color: #8c8c98;
	border-bottom-color: #8c8c98;
}
.grip-h:first-child {
	margin-top: 5px;
}
.tool {
	position: relative;
	display: flex;
	flex: none;
	align-items: center;
	justify-content: center;
	width: 28px;
	height: 28px;
}
.tool svg {
	width: 20px;
	height: 20px;
	fill: none;
	overflow: visible;
}
.side-tools .tool {
	margin-left: 1px;
}
.tool-wb {
	height: 30px;
}
.bottom-tools .tool-narrow {
	width: 22px;
}
.more::after {
	content: "";
	position: absolute;
	right: 0;
	bottom: 0;
	border: 4px solid transparent;
	border-top-color: #000;
	border-bottom: none;
}
.more-light::after {
	background: #fff;
}
.glyph {
	fill: #000;
	font: bold 11px "Liberation Serif", serif;
}
.glyph-s {
	font-size: 9px;
}
.chevrons {
	position: absolute;
	right: 4px;
	bottom: 6px;
	width: 8px;
	height: 8px;
}
.bottom-tools {
	display: flex;
	flex: none;
	align-items: flex-start;
	height: 38px;
	border-bottom: 1px solid #555;
	background: linear-gradient(#fff 3px, #d0d0e6 14px, #cdcde3 27px, #9292aa 37px);
}
.bottom-tools .tool {
	margin-top: 7px;
}
.grip-v {
	width: 3px;
	height: 16px;
	margin: 6px 5px 0 11px;
	background: #d8d8e4;
	border: 1px solid #fff;
	border-right-color: #8c8c98;
	border-bottom-color: #8c8c98;
}
.grip-v:first-child {
	margin-left: 8px;
}
.tool-fx {
	font-size: 11px;
}
.tool-fx i {
	font-family: "Liberation Serif", serif;
	font-size: 19px;
}
.brand {
	width: 42px;
	height: 34px;
	margin: 2px 6px 0 auto;
	overflow: visible;
}
.brand text {
	fill: #3c1f86;
	font: italic bold 11px "Open Sans", sans-serif;
}

/* status line */
.status {
	display: flex;
	flex: none;
	height: 22px;
}
.status-text {
	flex: 1;
	padding-left: 3px;
	line-height: 26px;
}
.status-input {
	width: 300px;
	border: none;
	border-top: 1px solid #888;
	border-right: 1px solid #555;
	background: #fff;
}
.status-btn {
	display: flex;
	align-items: center;
	justify-content: center;
	width: 33px;
	border: 1px solid #fff;
	border-right-color: #777;
}
.status-btn svg {
	width: 16px;
	height: 14px;
}
```
